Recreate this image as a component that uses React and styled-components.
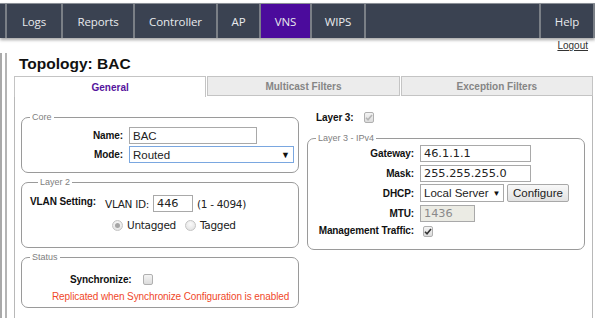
import styled, { createGlobalStyle } from "styled-components";

const GlobalStyle = createGlobalStyle`
  html, body {
    margin: 0;
    padding: 0;
    background: #fff;
    overflow: hidden;
  }

  body {
    font-family: "Liberation Sans", Arial, sans-serif;
    color: #111;
  }
`;

const Page = styled.div`
  width: 595px;
  height: 318px;
  overflow: hidden;
`;

const NavBar = styled.nav`
  margin-top: 3px;
  height: 34px;
  display: flex;
  background: #3a4251;
  border-top: 1px solid #8a8f96;
  box-shadow: 0 2px 3px rgba(0, 0, 0, 0.35);
`;

const NavStub = styled.div`
  width: 5px;
`;

const NavItem = styled.div`
  box-sizing: border-box;
  width: ${(props) => props.$w}px;
  display: flex;
  align-items: center;
  justify-content: center;
  border-left: 2px solid #7a7f86;
  font-family: "Open Sans", sans-serif;
  font-size: 11.5px;
  letter-spacing: -0.1px;
  color: #e8eaed;
  background: ${(props) => (props.$active ? "#4b0b9c" : "transparent")};

  &:last-child {
    border-right: 2px solid #7a7f86;
  }
`;

const NavSpacer = styled.div`
  flex: 1;
  border-left: 2px solid #7a7f86;
`;

const LogoutRow = styled.div`
  display: flex;
  justify-content: flex-end;
  padding: 2px 7px 0 0;
  height: 12px;
`;

const LogoutLink = styled.a`
  font-size: 10px;
  color: #333;
  text-decoration: underline;
  line-height: 12px;
`;

const Main = styled.div`
  display: flex;
  margin-top: 1px;
`;

const SideRail = styled.div`
  width: 3px;
  height: 270px;
  border-left: 2px solid #a9a9a9;
  border-right: 2px solid #b4b4b4;
  margin-right: 7px;
`;

const Content = styled.div`
  width: 579px;
`;

const Title = styled.h1`
  margin: 1px 0 0 5px;
  font-size: 15.5px;
  line-height: 19px;
  font-weight: bold;
  color: #111;
`;

const Tabs = styled.div`
  display: flex;
  margin-top: 3px;
  height: 20px;
`;

const Tab = styled.div`
  flex: 1;
  display: flex;
  align-items: center;
  justify-content: center;
  font-size: 10px;
  font-weight: bold;
  border: 1px solid #c4c4c4;
  border-bottom: ${(props) => (props.$active ? "none" : "1px solid #c4c4c4")};
  background: ${(props) => (props.$active ? "#fff" : "#ececec")};
  color: ${(props) => (props.$active ? "#55149c" : "#858585")};
  height: ${(props) => (props.$active ? "20px" : "18px")};

  & + & {
    margin-left: 1px;
  }
`;

const Panel = styled.div`
  display: grid;
  grid-template-columns: 278px 278px;
  column-gap: 8px;
  padding: 17px 8px 0 6px;
  height: 230px;
  border-left: 1px solid #b8b8b8;
  border-right: 1px solid #b8b8b8;
  align-items: start;
`;

const Column = styled.div`
  display: flex;
  flex-direction: column;
  gap: ${(props) => props.$gap}px;
`;

const Group = styled.fieldset`
  margin: 0;
  padding: ${(props) => props.$pad};
  border: 1px solid #9a9a9a;
  border-radius: 7px;
  min-width: 0;
`;

const Legend = styled.legend`
  margin-left: 8px;
  padding: 0 2px;
  font-size: 9px;
  line-height: 9px;
  color: #808080;
`;

const FormGrid = styled.div`
  display: grid;
  grid-template-columns: ${(props) => props.$label}px auto;
  column-gap: 6px;
  row-gap: ${(props) => props.$rowGap}px;
  align-items: center;
  justify-items: start;
`;

const Label = styled.label`
  justify-self: end;
  font-size: 10px;
  font-weight: bold;
  letter-spacing: -0.1px;
  white-space: nowrap;
`;

const RowHead = styled(Label)`
  justify-self: start;
  margin-top: 1px;
`;

const TextField = styled.div`
  box-sizing: border-box;
  width: ${(props) => props.$w}px;
  height: ${(props) => props.$h || 17}px;
  padding: 0 3px;
  display: flex;
  align-items: center;
  border: 1px solid ${(props) => (props.$focus ? "#7aa7e0" : "#a9a9a9")};
  background: ${(props) => (props.$disabled ? "#ebebe4" : "#fff")};
  color: ${(props) => (props.$disabled ? "#8a8a8a" : "#222")};
  font-family: ${(props) =>
    props.$numeric ? '"DejaVu Sans", Verdana, sans-serif' : '"Liberation Sans", Arial, sans-serif'};
  font-size: ${(props) => (props.$numeric ? "11.3px" : "11.5px")};
  white-space: nowrap;
`;

const Caret = styled.span`
  margin-left: auto;
  font-size: ${(props) => props.$size || 8}px;
  color: #111;
  padding-left: 4px;
`;

const Button = styled.div`
  box-sizing: border-box;
  height: 18px;
  padding: 0 5px;
  display: flex;
  align-items: center;
  border: 1px solid #a8a8a8;
  border-radius: 2px;
  background: linear-gradient(#f8f8f8, #e2e2e2);
  font-family: "Liberation Sans", Arial, sans-serif;
  font-size: 11.5px;
  color: #222;
`;

const Inline = styled.div`
  display: flex;
  align-items: center;
  gap: ${(props) => props.$gap || 0}px;
  margin-left: ${(props) => props.$ml || 0}px;
`;

const Plain = styled.span`
  font-family: "DejaVu Sans", Verdana, sans-serif;
  font-size: 10.5px;
  letter-spacing: -0.3px;
  color: #222;
  white-space: nowrap;
`;

const CheckBox = styled.span`
  box-sizing: border-box;
  width: 10px;
  height: 11px;
  border: 1px solid #b0b0b0;
  border-radius: 2px;
  background: linear-gradient(#f4f4f4, #dcdcdc);
  display: flex;
  align-items: center;
  justify-content: center;
  margin-left: ${(props) => props.$ml || 0}px;
  margin-top: ${(props) => props.$mt || 0}px;
`;

const Radio = styled.span`
  box-sizing: border-box;
  width: 11px;
  height: 11px;
  border-radius: 50%;
  border: 1px solid #c4c4c4;
  background: radial-gradient(circle at 50% 35%, #fafafa, #dedede);
  display: flex;
  align-items: center;
  justify-content: center;
  margin-left: ${(props) => props.$ml || 0}px;

  &::after {
    content: "";
    width: 5px;
    height: 5px;
    border-radius: 50%;
    background: ${(props) => (props.$on ? "#a5a5a5" : "transparent")};
  }
`;

const Warning = styled.div`
  margin: 6px 0 0 30px;
  font-size: 10px;
  letter-spacing: -0.1px;
  color: #f0482a;
  white-space: nowrap;
`;

const Layer3Row = styled.div`
  display: flex;
  align-items: center;
  gap: 10px;
  padding-left: 9px;
  height: 14px;
  margin-top: -3px;
`;

const VlanTable = styled.div`
  display: grid;
  grid-template-columns: 75px auto;
  align-items: start;
`;

function Tick({ color }) {
  return (
    <svg width="8" height="7" viewBox="0 0 8 7">
      <path d="M1 3.8 L3 5.8 L7 1" fill="none" stroke={ color } strokeWidth="1.6" />
    </svg>
  );
}

function App() {
  return (
    <Page>
      <GlobalStyle />
      <NavBar>
        <NavStub />
        <NavItem $w={56}>Logs</NavItem>
        <NavItem $w={72}>Reports</NavItem>
        <NavItem $w={83}>Controller</NavItem>
        <NavItem $w={43}>AP</NavItem>
        <NavItem $w={51} $active>VNS</NavItem>
        <NavItem $w={54}>WIPS</NavItem>
        <NavSpacer />
        <NavItem $w={56}>Help</NavItem>
      </NavBar>
      <LogoutRow>
        <LogoutLink>Logout</LogoutLink>
      </LogoutRow>
      <Main>
        <SideRail />
        <Content>
          <Title>Topology: BAC</Title>
          <Tabs>
            <Tab $active>General</Tab>
            <Tab>Multicast Filters</Tab>
            <Tab>Exception Filters</Tab>
          </Tabs>
          <Panel>
            <Column $gap={5}>
              <Group $pad="5px 0 9px 0">
                <Legend>Core</Legend>
                <FormGrid $label={101} $rowGap={2}>
                  <Label>Name:</Label>
                  <TextField $w={128}>BAC</TextField>
                  <Label>Mode:</Label>
                  <TextField $w={165} $focus>
                    Routed
                    <Caret $size={9}>▼</Caret>
                  </TextField>
                </FormGrid>
              </Group>
              <Group $pad="8px 0 16px 8px">
                <Legend>Layer 2</Legend>
                <VlanTable>
                  <RowHead as="div">VLAN Setting:</RowHead>
                  <Column $gap={7}>
                    <Inline $gap={4}>
                      <Plain>VLAN ID:</Plain>
                      <TextField $w={40} $numeric>446</TextField>
                      <Plain>(1 - 4094)</Plain>
                    </Inline>
                    <Inline $gap={4} $ml={7}>
                      <Radio $on />
                      <Plain>Untagged</Plain>
                      <Radio $ml={5} />
                      <Plain>Tagged</Plain>
                    </Inline>
                  </Column>
                </VlanTable>
              </Group>
              <Group $pad="12px 0 5px 0">
                <Legend>Status</Legend>
                <Inline $ml={48}>
                  <Label>Synchronize:</Label>
                  <CheckBox $ml={11} />
                </Inline>
                <Warning>Replicated when Synchronize Configuration is enabled</Warning>
              </Group>
            </Column>
            <Column $gap={10}>
              <Layer3Row>
                <Label>Layer 3:</Label>
                <CheckBox>
                  <Tick color="#b5b5b5" />
                </CheckBox>
              </Layer3Row>
              <Group $pad="2px 0 12px 0">
                <Legend>Layer 3 - IPv4</Legend>
                <FormGrid $label={106} $rowGap={2.5}>
                  <Label>Gateway:</Label>
                  <TextField $w={111} $numeric>46.1.1.1</TextField>
                  <Label>Mask:</Label>
                  <TextField $w={111} $numeric>255.255.255.0</TextField>
                  <Label>DHCP:</Label>
                  <Inline $gap={3}>
                    <TextField $w={84} $h={18}>
                      Local Server
                      <Caret>▼</Caret>
                    </TextField>
                    <Button>Configure</Button>
                  </Inline>
                  <Label>MTU:</Label>
                  <TextField $w={55} $disabled $numeric>1436</TextField>
                  <Label>Management Traffic:</Label>
                  <CheckBox $ml={3} $mt={2}>
                    <Tick color="#333" />
                  </CheckBox>
                </FormGrid>
              </Group>
            </Column>
          </Panel>
        </Content>
      </Main>
    </Page>
  );
}

export default App;
